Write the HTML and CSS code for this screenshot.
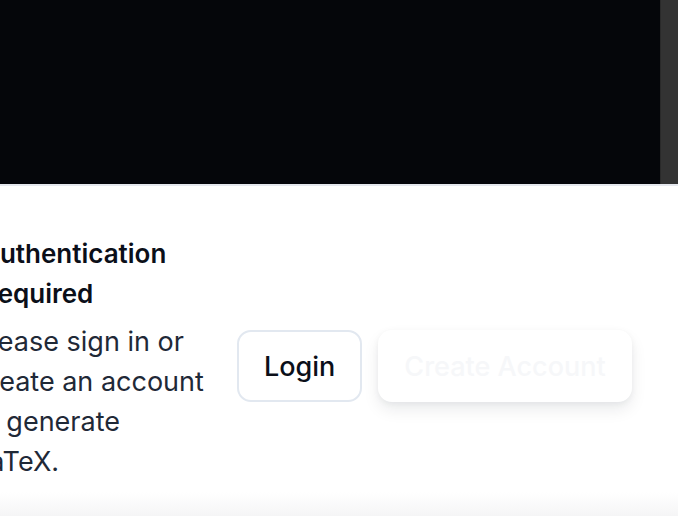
FILE: index.html
```html
<!DOCTYPE html>
<html lang="en">
<head>
<meta charset="utf-8">
<title>Authentication Required</title>
<link rel="stylesheet" href="styles.css">
</head>
<body>
<div class="page">
  <div class="preview">
    <div class="preview-canvas"></div>
    <div class="scrollbar"></div>
  </div>
  <section class="auth">
    <div class="auth-text">
      <h2 class="auth-title">Authentication Required</h2>
      <p class="auth-desc">Please sign in or create an account to generate LaTeX.</p>
    </div>
    <div class="auth-actions">
      <button class="btn btn-outline">Login</button>
      <button class="btn btn-primary">Create Account</button>
    </div>
  </section>
  <div class="fade"></div>
</div>
</body>
</html>
```

FILE: styles.css
```css
html, body {
  margin: 0;
  padding: 0;
  background: #ffffff;
  overflow: hidden;
}
body {
  font-family: Inter, "Noto Sans", sans-serif;
  width: 678px;
  height: 516px;
}
.page {
  display: flex;
  flex-direction: column;
  height: 516px;
  overflow: hidden;
}
.preview {
  display: flex;
  height: 184px;
  flex: none;
  border-bottom: 2px solid #e5e8ee;
}
.preview-canvas {
  flex: 1;
  background: #05060a;
}
.scrollbar {
  width: 17px;
  background: #333333;
  border-left: 1px solid #2a2a2a;
}
.auth {
  display: flex;
  align-items: center;
  gap: 27px;
  padding-top: 48px;
  margin-left: -26px;
}
.auth-text {
  width: 236px;
  flex: none;
  display: flex;
  flex-direction: column;
  gap: 8px;
}
.auth-title {
  margin: 0;
  font-size: 26px;
  line-height: 40px;
  font-weight: 600;
  color: #0b0f19;
  padding-left: 7px;
}
.auth-desc {
  margin: 0;
  font-size: 27px;
  line-height: 40px;
  font-weight: 400;
  color: #1f2937;
}
.auth-actions {
  display: flex;
  gap: 16px;
  margin-top: 16px;
}
.btn {
  font-family: Inter, "Noto Sans", sans-serif;
  font-size: 27px;
  font-weight: 500;
  height: 72px;
  padding: 0 25px;
  border-radius: 14px;
  cursor: pointer;
}
.btn-outline {
  background: #ffffff;
  color: #0b0f19;
  border: 2px solid #e2e8f0;
}
.btn-primary {
  background: #ffffff;
  color: #f6f7f9;
  border: none;
  padding: 0 26px;
  box-shadow: 0 8px 16px rgba(15, 23, 42, 0.08), 0 2px 6px rgba(15, 23, 42, 0.05);
}
.fade {
  flex: 1;
  background: linear-gradient(to bottom, #ffffff 0%, #ffffff 30%, #f5f5f6 100%);
}
```
